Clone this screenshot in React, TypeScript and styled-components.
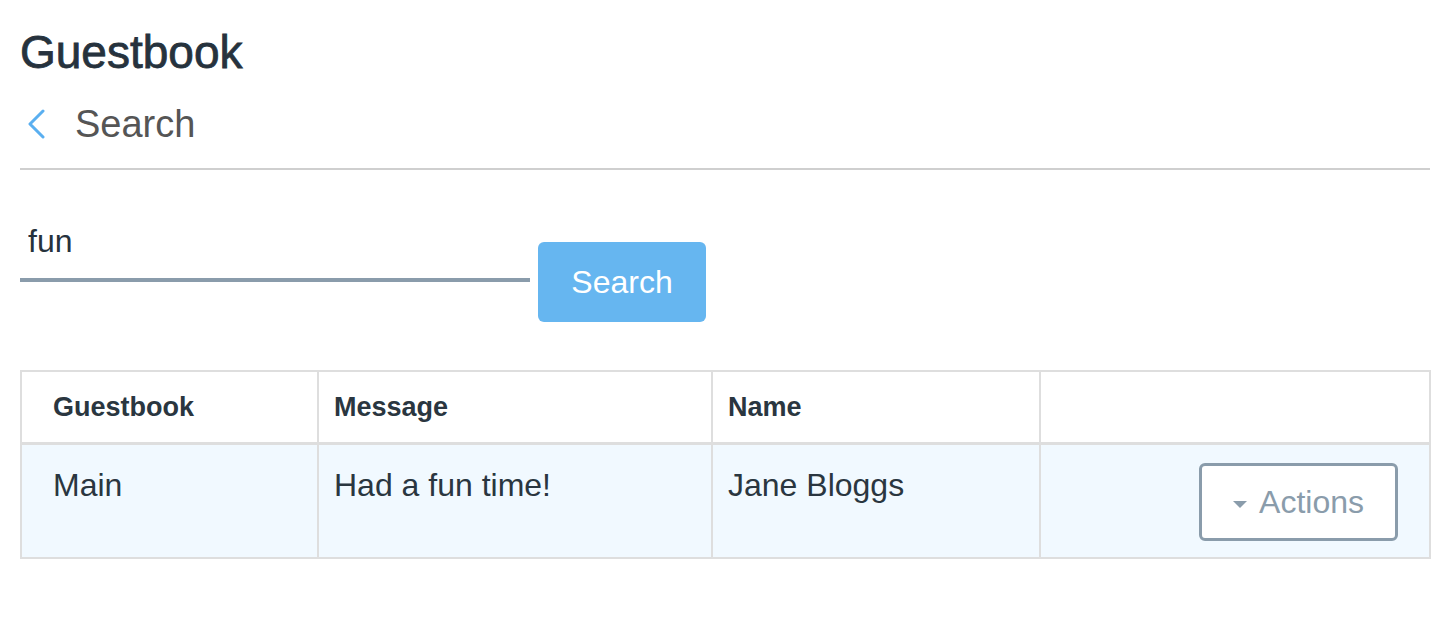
import styled, { createGlobalStyle } from "styled-components";

const GlobalStyle = createGlobalStyle`
  body {
    margin: 0;
    background: #fff;
    font-family: "Liberation Sans", Arial, sans-serif;
    color: #26323d;
  }
`;

const Page = styled.div`
  padding: 28px 20px 0;
`;

const Title = styled.h1`
  margin: 0;
  font-size: 46px;
  line-height: 48px;
  font-weight: 400;
  -webkit-text-stroke: 0.8px #26323d;
  color: #26323d;
`;

const BackBar = styled.div`
  display: flex;
  align-items: center;
  margin-top: 24px;
  padding-bottom: 20px;
  border-bottom: 2px solid #cfcfcf;
`;

const BackButton = styled.button`
  display: flex;
  align-items: center;
  border: none;
  background: none;
  padding: 0 0 0 7px;
  margin-right: 30px;
  cursor: pointer;
`;

const SubTitle = styled.h2`
  margin: 0;
  font-size: 38px;
  line-height: 48px;
  font-weight: 400;
  color: #555;
`;

const SearchForm = styled.form`
  display: flex;
  align-items: flex-start;
  gap: 8px;
  margin-top: 40px;
`;

const SearchInput = styled.input`
  width: 510px;
  box-sizing: border-box;
  padding: 11px 8px 17px;
  font-family: inherit;
  font-size: 32px;
  line-height: 40px;
  color: #26323d;
  border: none;
  border-bottom: 4px solid #8a9cab;
  outline: none;
  background: transparent;
`;

const PrimaryButton = styled.button`
  margin-top: 32px;
  width: 168px;
  height: 80px;
  border: none;
  border-radius: 6px;
  background: #66b6f0;
  color: #fff;
  font-family: inherit;
  font-size: 32px;
  padding-top: 2px;
  cursor: pointer;
`;

const Table = styled.table`
  margin-top: 48px;
  width: 1409px;
  border-collapse: collapse;
  table-layout: fixed;
`;

const HeadCell = styled.th`
  height: 70px;
  padding: 0 15px;
  border: 2px solid #dedede;
  border-bottom-width: 3px;
  text-align: left;
  vertical-align: middle;
  font-size: 27px;
  font-weight: 700;
  color: #2a3640;

  &:first-child {
    padding-left: 31px;
  }
`;

const BodyRow = styled.tr`
  background: #f1f9ff;
`;

const Cell = styled.td<{ $align?: "left" | "right" }>`
  height: 114px;
  box-sizing: border-box;
  padding: 20px 15px 0;
  border: 2px solid #dedede;
  text-align: ${(p) => p.$align ?? "left"};
  vertical-align: top;
  font-size: 32px;
  line-height: 40px;
  color: #2a3640;

  &:first-child {
    padding-left: 31px;
  }
  &:last-child {
    padding-right: 31px;
  }
`;

const ActionsButton = styled.button`
  display: inline-flex;
  align-items: center;
  gap: 12px;
  height: 78px;
  margin-top: -2px;
  padding: 0 31px;
  border: 3px solid #8a9cab;
  border-radius: 6px;
  background: #fff;
  color: #8a9cab;
  font-family: inherit;
  font-size: 32px;
  cursor: pointer;
`;

const Caret = styled.span`
  width: 0;
  height: 0;
  margin-top: 4px;
  border-left: 7px solid transparent;
  border-right: 7px solid transparent;
  border-top: 7px solid #8a9cab;
`;

const rows = [{ guestbook: "Main", message: "Had a fun time!", name: "Jane Bloggs" }];

export default function App() {
  return (
    <Page>
      <GlobalStyle />
      <Title>Guestbook</Title>
      <BackBar>
        <BackButton aria-label="Back">
          <svg width="18" height="30" viewBox="0 0 18 30">
            <polyline
              points="16,2 3,15 16,28"
              fill="none"
              stroke="#5aaff0"
              strokeWidth="3"
              strokeLinecap="round"
              strokeLinejoin="round"
            />
          </svg>
        </BackButton>
        <SubTitle>Search</SubTitle>
      </BackBar>
      <SearchForm onSubmit={(e) => e.preventDefault()}>
        <SearchInput defaultValue="fun" />
        <PrimaryButton type="submit">Search</PrimaryButton>
      </SearchForm>
      <Table>
        <colgroup>
          <col style={{ width: 297 }} />
          <col style={{ width: 394 }} />
          <col style={{ width: 328 }} />
          <col style={{ width: 390 }} />
        </colgroup>
        <thead>
          <tr>
            <HeadCell>Guestbook</HeadCell>
            <HeadCell>Message</HeadCell>
            <HeadCell>Name</HeadCell>
            <HeadCell />
          </tr>
        </thead>
        <tbody>
          {rows.map((r) => (
            <BodyRow key={r.name}>
              <Cell>{r.guestbook}</Cell>
              <Cell>{r.message}</Cell>
              <Cell>{r.name}</Cell>
              <Cell $align="right">
                <ActionsButton>
                  <Caret />
                  Actions
                </ActionsButton>
              </Cell>
            </BodyRow>
          ))}
        </tbody>
      </Table>
    </Page>
  );
}
